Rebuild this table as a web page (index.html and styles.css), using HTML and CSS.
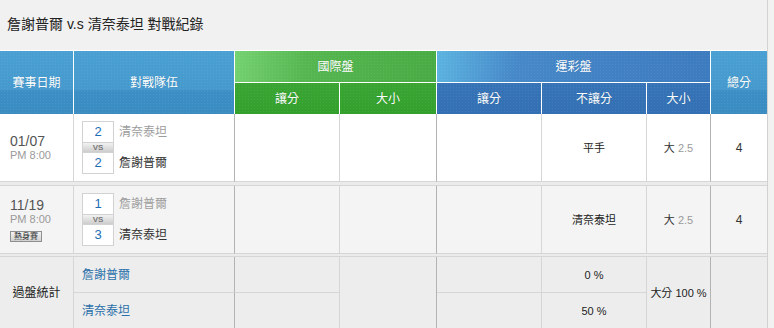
FILE: index.html
```html
<!DOCTYPE html>
<html lang="zh-Hant">
<head>
<meta charset="utf-8">
<title>對戰紀錄</title>
<link rel="stylesheet" href="styles.css">
</head>
<body>
<div class="page">
  <h1 class="title">詹謝普爾 v.s 清奈泰坦 對戰紀錄</h1>
  <div class="grid">
    <div class="h h-blue span-r2">賽事日期</div>
    <div class="h h-blue span-r2 dark-r">對戰隊伍</div>
    <div class="h h-green-top span-c2">國際盤</div>
    <div class="h h-navy-top span-c3">運彩盤</div>
    <div class="h h-blue span-r2 last">總分</div>
    <div class="h h-green">讓分</div>
    <div class="h h-green">大小</div>
    <div class="h h-navy">讓分</div>
    <div class="h h-navy">不讓分</div>
    <div class="h h-navy">大小</div>

    <!-- row 1 -->
    <div class="c r-white date">
      <div class="day">01/07</div>
      <div class="time">PM 8:00</div>
    </div>
    <div class="c r-white dark-r team">
      <div class="scores">
        <div class="score">2</div>
        <div class="vs">VS</div>
        <div class="score">2</div>
      </div>
      <div class="names">
        <div class="name name-a">清奈泰坦</div>
        <div class="name name-b">詹謝普爾</div>
      </div>
    </div>
    <div class="c r-white"></div>
    <div class="c r-white dark-r"></div>
    <div class="c r-white"></div>
    <div class="c r-white mid">平手</div>
    <div class="c r-white dark-r mid"><span class="ou">大</span>&nbsp;<span class="line">2.5</span></div>
    <div class="c r-white last mid total">4</div>

    <div class="gap gap-4"></div>

    <!-- row 2 -->
    <div class="c r-grey date">
      <div class="day">11/19</div>
      <div class="time">PM 8:00</div>
      <div class="badge">熱身賽</div>
    </div>
    <div class="c r-grey dark-r team">
      <div class="scores">
        <div class="score">1</div>
        <div class="vs">VS</div>
        <div class="score">3</div>
      </div>
      <div class="names">
        <div class="name name-a">詹謝普爾</div>
        <div class="name name-b">清奈泰坦</div>
      </div>
    </div>
    <div class="c r-grey"></div>
    <div class="c r-grey dark-r"></div>
    <div class="c r-grey"></div>
    <div class="c r-grey mid">清奈泰坦</div>
    <div class="c r-grey dark-r mid"><span class="ou">大</span>&nbsp;<span class="line">2.5</span></div>
    <div class="c r-grey last mid total">4</div>

    <div class="gap gap-3"></div>

    <!-- stats -->
    <div class="c r-stat span-r2 mid stat-label">過盤統計</div>
    <div class="c r-stat dark-r stat-name">詹謝普爾</div>
    <div class="c r-stat"></div>
    <div class="c r-stat dark-r span-r2"></div>
    <div class="c r-stat"></div>
    <div class="c r-stat mid">0 %</div>
    <div class="c r-stat dark-r span-r2 mid">大分 100 %</div>
    <div class="c r-stat last span-r2"></div>
    <div class="c r-stat dark-r stat-name">清奈泰坦</div>
    <div class="c r-stat"></div>
    <div class="c r-stat"></div>
    <div class="c r-stat mid">50 %</div>
  </div>
</div>
</body>
</html>
```

FILE: styles.css
```css
* { box-sizing: border-box; }

html, body {
  margin: 0;
  padding: 0;
  background: #f1f1f1;
}

body {
  font-family: "Liberation Sans", "Noto Sans CJK TC", sans-serif;
  color: #333;
}

.page {
  width: 768px;
  border-right: 1px solid #d2d2d2;
  min-height: 328px;
}

.title {
  margin: 0;
  height: 50px;
  padding: 0 7px;
  font-size: 14px;
  font-weight: normal;
  line-height: 48px;
  color: #222;
}

.grid {
  display: grid;
  grid-template-columns: 74px 161px 105px 97px 105px 105px 64px 56px;
  grid-template-rows: 32px 31px 68px 4px 68px 3px 36px 37px;
  border-top: 1px solid #fff;
}

/* header */
.h {
  display: flex;
  align-items: center;
  justify-content: center;
  color: #fff;
  font-size: 12px;
  line-height: 14px;
  border-right: 1px solid #fff;
  text-shadow: 0 0 1px rgba(0, 0, 0, 0.15);
}

.h.last { border-right: none; }

.span-r2 { grid-row: span 2; }
.span-c2 { grid-column: span 2; border-bottom: 1px solid #fff; }
.span-c3 { grid-column: span 3; border-bottom: 1px solid #fff; }

.h-blue {
  background:
    radial-gradient(circle, rgba(255,255,255,0.07) 0.7px, transparent 0.8px) 0 0 / 3px 3px,
    linear-gradient(#4aa0d3 0%, #4599cd 62%, #3b8fc4 63%, #3a8cc1 100%);
}

.h-green-top {
  background:
    radial-gradient(circle, rgba(255,255,255,0.07) 0.7px, transparent 0.8px) 0 0 / 3px 3px,
    linear-gradient(100deg, #75d271 0%, #56b751 35%, #48ab43 100%);
}

.h-green {
  background:
    radial-gradient(circle, rgba(255,255,255,0.07) 0.7px, transparent 0.8px) 0 0 / 3px 3px,
    linear-gradient(#3aa533, #33a02c);
}

.h-navy-top {
  background:
    radial-gradient(circle, rgba(255,255,255,0.07) 0.7px, transparent 0.8px) 0 0 / 3px 3px,
    linear-gradient(100deg, #5cb4e0 0%, #4688c8 30%, #3d7bbf 100%);
}

.h-navy {
  background:
    radial-gradient(circle, rgba(255,255,255,0.07) 0.7px, transparent 0.8px) 0 0 / 3px 3px,
    linear-gradient(#3674b7, #3270b3);
}

/* body cells */
.c {
  border-right: 1px solid #d6d6d6;
  border-bottom: 1px solid #d6d6d6;
  font-size: 11px;
  line-height: 14px;
  color: #222;
}

.c.dark-r { border-right-color: #b3b3b3; }
.c.last { border-right: none; }

.r-white { background: #fff; }
.r-grey { background: #f4f4f4; }
.r-stat { background: #ededed; }

.mid {
  display: flex;
  align-items: center;
  justify-content: center;
}

.gap {
  grid-column: 1 / -1;
  background: #ebebeb;
  border-bottom: 1px solid #d6d6d6;
}

/* date */
.date {
  display: flex;
  flex-direction: column;
  justify-content: center;
  padding-left: 10px;
}

.day {
  font-size: 14px;
  line-height: 14px;
  color: #555;
}

.time {
  font-size: 11px;
  line-height: 14px;
  color: #9a9a9a;
}

.badge {
  align-self: flex-start;
  margin-top: 5px;
  height: 11px;
  padding: 0 3px;
  border: 1px solid #8f8f8f;
  background: linear-gradient(#f2f2f2, #d2d2d2);
  font-size: 8px;
  line-height: 9px;
  color: #333;
}

/* team */
.team {
  display: flex;
  align-items: center;
  padding-left: 8px;
}

.scores {
  display: flex;
  flex-direction: column;
  width: 32px;
}

.score {
  height: 22px;
  border: 1px solid #d2d2d2;
  background: #fff;
  color: #1d6db4;
  font-size: 13px;
  line-height: 20px;
  text-align: center;
}

.vs {
  height: 9px;
  background: linear-gradient(#f2f2f2, #cdcdcd);
  border-left: 1px solid #d2d2d2;
  border-right: 1px solid #d2d2d2;
  font-size: 8px;
  line-height: 9px;
  font-weight: bold;
  color: #7a7a7a;
  text-align: center;
}

.names {
  display: flex;
  flex-direction: column;
  justify-content: space-between;
  height: 53px;
  margin-left: 5px;
  padding: 3px 0 3px;
}

.name {
  font-size: 12px;
  line-height: 16px;
}

.name-a { color: #9d9d9d; }
.name-b { color: #333; }

.ou { color: #333; }
.line { color: #9a9a9a; }
.total { font-size: 12px; color: #333; }

/* stats */
.stat-label {
  font-size: 12px;
  color: #222;
}

.stat-name {
  display: flex;
  align-items: center;
  padding-left: 8px;
  font-size: 12px;
  color: #2a70aa;
}
```
